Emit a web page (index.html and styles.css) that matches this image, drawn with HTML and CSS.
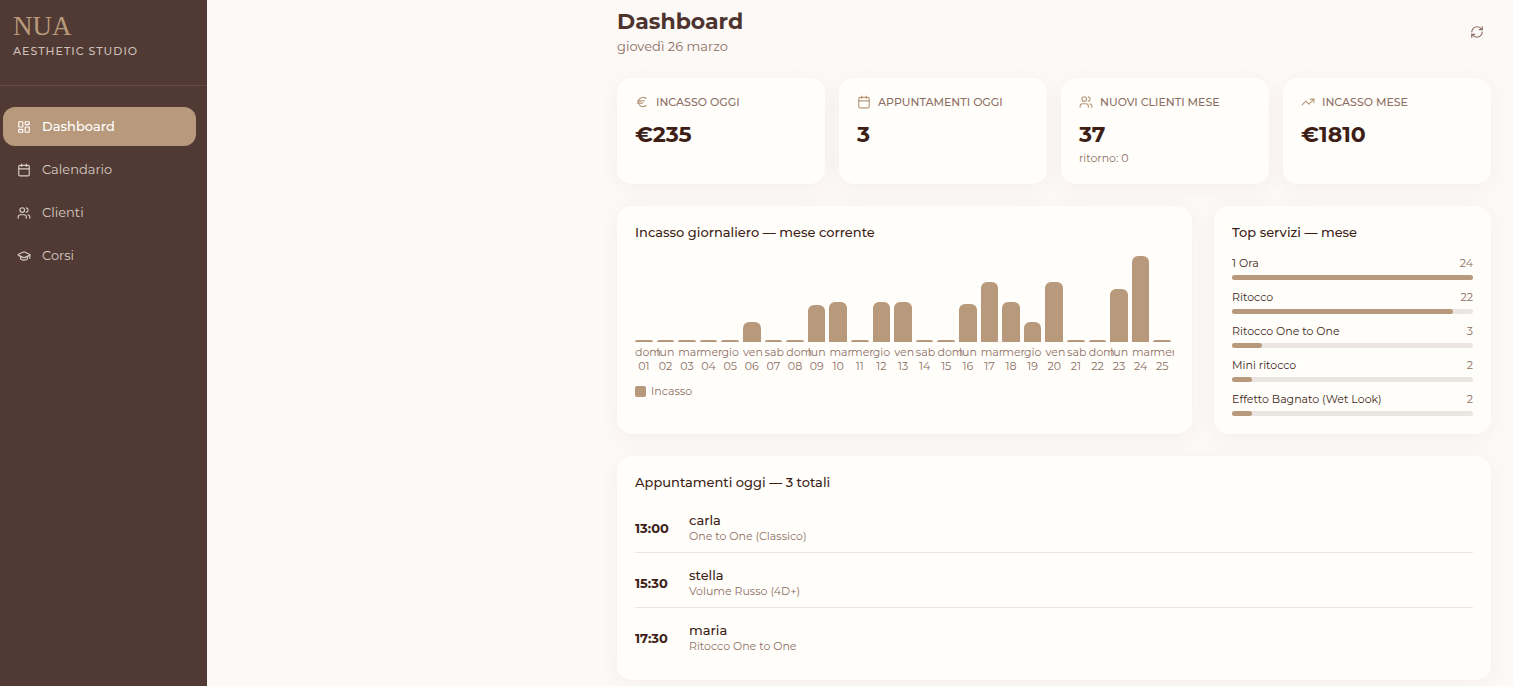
FILE: index.html
```html
<!DOCTYPE html>
<html lang="it">
<head>
    <meta charset="UTF-8">
    <meta name="viewport" content="width=device-width, initial-scale=1.0">
    <title>NUA Aesthetic Studio</title>
    <link rel="stylesheet" href="styles.css">
</head>
<body>
    <svg class="sprite" aria-hidden="true">
        <symbol id="i-dashboard" viewBox="0 0 24 24">
            <rect x="3" y="3" width="7" height="9" rx="1"/>
            <rect x="14" y="3" width="7" height="5" rx="1"/>
            <rect x="14" y="12" width="7" height="9" rx="1"/>
            <rect x="3" y="16" width="7" height="5" rx="1"/>
        </symbol>
        <symbol id="i-calendar" viewBox="0 0 24 24">
            <path d="M8 2v4M16 2v4M3 10h18"/>
            <rect x="3" y="4" width="18" height="18" rx="2"/>
        </symbol>
        <symbol id="i-users" viewBox="0 0 24 24">
            <path d="M16 21v-2a4 4 0 0 0-4-4H6a4 4 0 0 0-4 4v2"/>
            <circle cx="9" cy="7" r="4"/>
            <path d="M22 21v-2a4 4 0 0 0-3-3.87"/>
            <path d="M16 3.13a4 4 0 0 1 0 7.75"/>
        </symbol>
        <symbol id="i-course" viewBox="0 0 24 24">
            <path d="M21.42 10.92a1 1 0 0 0-.02-1.84L12.83 5.18a2 2 0 0 0-1.66 0L2.6 9.08a1 1 0 0 0 0 1.83l8.57 3.91a2 2 0 0 0 1.66 0z"/>
            <path d="M22 10v6M6 12.5V16a6 3 0 0 0 12 0v-3.5"/>
        </symbol>
        <symbol id="i-euro" viewBox="0 0 24 24">
            <path d="M4 10h12M4 14h9"/>
            <path d="M19 6a7.7 7.7 0 0 0-5.2-2A7.9 7.9 0 0 0 6 12c0 4.4 3.5 8 7.8 8 2 0 3.8-.8 5.2-2"/>
        </symbol>
        <symbol id="i-trend" viewBox="0 0 24 24">
            <path d="M16 7h6v6"/>
            <path d="m22 7-8.5 8.5-5-5L2 17"/>
        </symbol>
        <symbol id="i-refresh" viewBox="0 0 24 24">
            <path d="M3 12a9 9 0 0 1 9-9 9.75 9.75 0 0 1 6.74 2.74L21 8"/>
            <path d="M21 3v5h-5"/>
            <path d="M21 12a9 9 0 0 1-9 9 9.75 9.75 0 0 1-6.74-2.74L3 16"/>
            <path d="M8 16H3v5"/>
        </symbol>
    </svg>

    <div class="layout">
        <aside class="sidebar">
            <div class="brand">
                <div class="brand-name">NUA</div>
                <div class="brand-sub">AESTHETIC STUDIO</div>
            </div>
            <nav class="menu">
                <a class="menu-item active" href="#dashboard"><svg class="icon"><use href="#i-dashboard"/></svg>Dashboard</a>
                <a class="menu-item" href="#calendario"><svg class="icon"><use href="#i-calendar"/></svg>Calendario</a>
                <a class="menu-item" href="#clienti"><svg class="icon"><use href="#i-users"/></svg>Clienti</a>
                <a class="menu-item" href="#corsi"><svg class="icon"><use href="#i-course"/></svg>Corsi</a>
            </nav>
        </aside>

        <main class="content">
            <header class="page-header">
                <div>
                    <h1>Dashboard</h1>
                    <p class="date">giovedì 26 marzo</p>
                </div>
                <button class="refresh" type="button" aria-label="Aggiorna"><svg class="icon"><use href="#i-refresh"/></svg></button>
            </header>

            <section class="stats">
                <div class="card">
                    <div class="stat-label"><svg class="icon"><use href="#i-euro"/></svg>INCASSO OGGI</div>
                    <div class="stat-value">€235</div>
                </div>
                <div class="card">
                    <div class="stat-label"><svg class="icon"><use href="#i-calendar"/></svg>APPUNTAMENTI OGGI</div>
                    <div class="stat-value">3</div>
                </div>
                <div class="card">
                    <div class="stat-label"><svg class="icon"><use href="#i-users"/></svg>NUOVI CLIENTI MESE</div>
                    <div class="stat-value">37</div>
                    <div class="stat-note">ritorno: 0</div>
                </div>
                <div class="card">
                    <div class="stat-label"><svg class="icon"><use href="#i-trend"/></svg>INCASSO MESE</div>
                    <div class="stat-value">€1810</div>
                </div>
            </section>

            <section class="panels">
                <div class="card">
                    <h2>Incasso giornaliero — mese corrente</h2>
                    <div class="chart" id="chart"></div>
                    <div class="legend"><span class="swatch"></span>Incasso</div>
                </div>

                <div class="card">
                    <h2>Top servizi — mese</h2>
                    <ul class="services">
                        <li>
                            <div class="service-row"><span>1 Ora</span><span class="count">24</span></div>
                            <div class="track"><div class="fill" style="width: 100%"></div></div>
                        </li>
                        <li>
                            <div class="service-row"><span>Ritocco</span><span class="count">22</span></div>
                            <div class="track"><div class="fill" style="width: 91.67%"></div></div>
                        </li>
                        <li>
                            <div class="service-row"><span>Ritocco One to One</span><span class="count">3</span></div>
                            <div class="track"><div class="fill" style="width: 12.5%"></div></div>
                        </li>
                        <li>
                            <div class="service-row"><span>Mini ritocco</span><span class="count">2</span></div>
                            <div class="track"><div class="fill" style="width: 8.33%"></div></div>
                        </li>
                        <li>
                            <div class="service-row"><span>Effetto Bagnato (Wet Look)</span><span class="count">2</span></div>
                            <div class="track"><div class="fill" style="width: 8.33%"></div></div>
                        </li>
                    </ul>
                </div>
            </section>

            <section class="card">
                <h2>Appuntamenti oggi — 3 totali</h2>
                <ul class="appointments">
                    <li>
                        <span class="time">13:00</span>
                        <div>
                            <div class="client">carla</div>
                            <div class="service">One to One (Classico)</div>
                        </div>
                    </li>
                    <li>
                        <span class="time">15:30</span>
                        <div>
                            <div class="client">stella</div>
                            <div class="service">Volume Russo (4D+)</div>
                        </div>
                    </li>
                    <li>
                        <span class="time">17:30</span>
                        <div>
                            <div class="client">maria</div>
                            <div class="service">Ritocco One to One</div>
                        </div>
                    </li>
                </ul>
            </section>
        </main>
    </div>

    <script src="script.js"></script>
</body>
</html>
```
FILE: styles.css
```css
* {
    margin: 0;
    padding: 0;
    box-sizing: border-box;
}

body {
    font-family: Montserrat, Inter, sans-serif;
    font-size: 13px;
    line-height: 17px;
    background-color: #fdf9f7;
    color: #3e1f18;
}

ul {
    list-style: none;
}

.sprite {
    display: none;
}

.icon {
    width: 14px;
    height: 14px;
    flex-shrink: 0;
    fill: none;
    stroke: currentColor;
    stroke-width: 2;
    stroke-linecap: round;
    stroke-linejoin: round;
}

.layout {
    display: flex;
    min-height: 100vh;
}

/* Sidebar */
.sidebar {
    width: 207px;
    flex-shrink: 0;
    background-color: #503a33;
}

.brand {
    padding: 10px 13px 25px;
    border-bottom: 1px solid #654b43;
}

.brand-name {
    font-family: "Liberation Serif", serif;
    font-size: 27px;
    line-height: 32px;
    color: #b8997c;
}

.brand-sub {
    margin-top: 1px;
    font-size: 11px;
    font-weight: 500;
    letter-spacing: 1px;
    color: #cdc0bb;
}

.menu {
    display: flex;
    flex-direction: column;
    gap: 4px;
    padding: 21px 11px 0 3px;
}

.menu-item {
    display: flex;
    align-items: center;
    gap: 11px;
    padding: 11px 14px;
    border-radius: 12px;
    color: #d6cbc6;
    text-decoration: none;
}

.menu-item.active {
    background-color: #b8997c;
    color: #fff;
    font-weight: 500;
}

/* Content */
.content {
    flex: 1;
    min-width: 0;
    display: flex;
    flex-direction: column;
    gap: 22px;
    padding: 9px 22px 6px 410px;
}

.page-header {
    display: flex;
    justify-content: space-between;
    align-items: center;
    margin-bottom: 1px;
}

h1 {
    font-size: 22px;
    line-height: 26px;
    color: #4e342e;
}

.date {
    margin-top: 2px;
    line-height: 18px;
    color: #8d6e63;
}

.refresh {
    display: flex;
    padding: 7px;
    border: none;
    background: none;
    color: #8d6e63;
    cursor: pointer;
}

.card {
    padding: 18px;
    border-radius: 15px;
    background-color: #fffefb;
    box-shadow: 0 4px 22px rgba(78, 52, 46, 0.05);
}

h2 {
    margin-bottom: 14px;
    font-size: 13px;
    font-weight: 500;
}

/* Stats */
.stats {
    display: grid;
    grid-template-columns: repeat(4, 1fr);
    gap: 14px;
}

.stat-label {
    display: flex;
    align-items: center;
    gap: 7px;
    height: 12px;
    margin-bottom: 13px;
    font-size: 11px;
    font-weight: 500;
    white-space: nowrap;
    color: #8d6e63;
}

.stat-label .icon {
    color: #b8997c;
}

.stat-value {
    font-size: 22px;
    font-weight: 700;
    line-height: 28px;
}

.stat-note {
    margin-top: 1px;
    font-size: 11px;
    line-height: 16px;
    color: #8d6e63;
}

/* Chart and services */
.panels {
    display: grid;
    grid-template-columns: 27fr 13fr;
    gap: 22px;
}

.chart {
    display: grid;
    grid-template-columns: repeat(25, minmax(0, 1fr));
    gap: 4px;
    padding-right: 3px;
    overflow: hidden;
    font-size: 11px;
    line-height: 14px;
    text-align: center;
    color: #8d6e63;
}

.bar-area {
    display: flex;
    align-items: flex-end;
    height: 87px;
    margin-bottom: 3px;
}

.bar {
    width: 100%;
    min-height: 2px;
    border-radius: 6px 6px 0 0;
    background-color: #b8997c;
}

.legend {
    display: flex;
    align-items: center;
    gap: 5px;
    margin-top: 11px;
    font-size: 11px;
    line-height: 14px;
    color: #8d6e63;
}

.swatch {
    width: 11px;
    height: 11px;
    border-radius: 2px;
    background-color: #b8997c;
}

.services {
    display: flex;
    flex-direction: column;
    gap: 9px;
}

.service-row {
    display: flex;
    justify-content: space-between;
    margin-bottom: 4px;
    font-size: 11px;
    line-height: 16px;
}

.count {
    color: #8d6e63;
}

.track {
    height: 5px;
    border-radius: 3px;
    background-color: #ece6e3;
}

.fill {
    height: 100%;
    border-radius: 3px;
    background-color: #b8997c;
}

/* Appointments */
.appointments {
    display: flex;
    flex-direction: column;
    gap: 7px;
}

.appointments li {
    display: flex;
    align-items: center;
    padding: 7px 0 8px;
    border-bottom: 1px solid #ebe6e2;
}

.appointments li:last-child {
    border-bottom: none;
}

.time {
    width: 54px;
    font-weight: 700;
}

.client {
    font-weight: 500;
    line-height: 16px;
}

.service {
    font-size: 11px;
    line-height: 16px;
    color: #8d6e63;
}
```
FILE: script.js
```js
const days = ['dom', 'lun', 'mar', 'mer', 'gio', 'ven', 'sab'];

// bar height of each day, in px
const bars = [0, 0, 0, 0, 0, 20, 0, 0, 37, 40, 0, 40, 40, 0, 0, 38, 60, 40, 20, 60, 0, 0, 53, 86, 0];

const chart = document.getElementById('chart');

bars.forEach((height, i) => {
    const column = document.createElement('div');
    const number = String(i + 1).padStart(2, '0');
    column.innerHTML = `
        <div class="bar-area"><div class="bar" style="height: ${height}px"></div></div>
        <div>${days[i % 7]}</div>
        <div>${number}</div>`;
    chart.appendChild(column);
});
```
